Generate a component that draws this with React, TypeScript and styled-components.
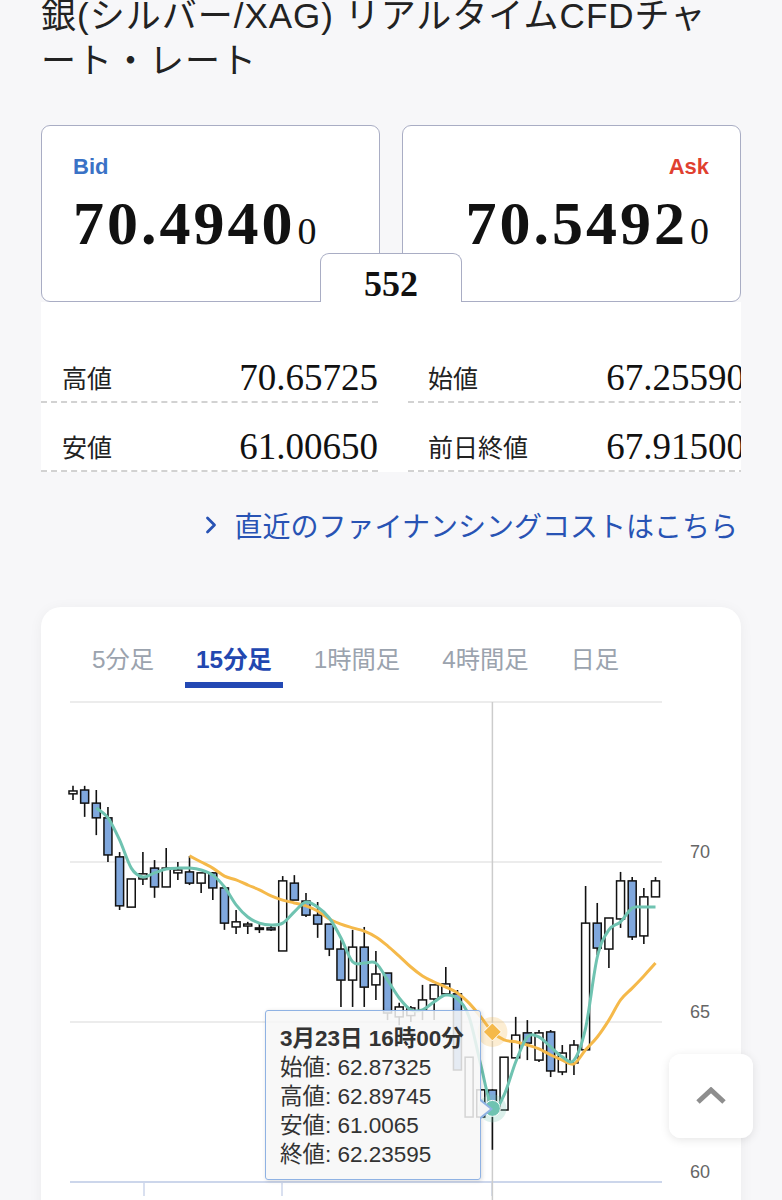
import React from "react";
import styled, { createGlobalStyle } from "styled-components";
import { ChevronRight } from "lucide-react";

const GlobalStyle = createGlobalStyle`
  html, body {
    overflow: hidden;
  }
  body {
    margin: 0;
    background: #f7f7f9;
    color: #222;
    font-family: "Liberation Sans", "Noto Sans CJK JP", sans-serif;
  }
`;

// open, high, low, close (15分足)
const candles: [number, number, number, number][] = [
  [72.13, 72.38, 71.94, 72.22],
  [72.25, 72.38, 71.41, 71.84],
  [71.84, 72.25, 70.84, 71.38],
  [71.38, 71.72, 70.0, 70.22],
  [70.16, 70.31, 68.5, 68.63],
  [68.59, 69.47, 68.59, 69.47],
  [69.47, 70.31, 69.28, 69.63],
  [69.81, 70.06, 68.88, 69.22],
  [69.22, 70.44, 69.22, 69.81],
  [69.66, 70.0, 69.44, 69.75],
  [69.69, 70.19, 69.28, 69.34],
  [69.34, 69.66, 69.03, 69.66],
  [69.66, 69.69, 68.81, 69.19],
  [69.19, 69.19, 67.88, 68.09],
  [67.97, 68.5, 67.75, 68.13],
  [68.0, 68.13, 67.75, 68.06],
  [67.91, 68.09, 67.78, 67.94],
  [67.94, 68.0, 67.84, 67.88],
  [67.22, 69.56, 67.22, 69.41],
  [69.34, 69.59, 68.81, 68.81],
  [68.78, 69.03, 68.28, 68.34],
  [68.34, 68.75, 67.63, 68.06],
  [68.06, 68.06, 67.06, 67.28],
  [67.28, 67.56, 65.47, 66.31],
  [66.31, 67.88, 65.47, 67.34],
  [67.34, 67.97, 65.47, 66.09],
  [66.16, 67.22, 65.69, 66.5],
  [66.53, 66.53, 65.06, 65.28],
  [65.16, 65.6, 64.9, 65.47],
  [65.2, 65.5, 65.0, 65.44],
  [65.38, 66.16, 65.06, 65.69],
  [65.72, 66.16, 65.06, 66.16],
  [65.88, 66.72, 65.84, 66.19],
  [65.88, 66.0, 63.5, 63.5],
  [62.03, 63.9, 62.03, 63.9],
  [62.03, 62.88, 62.03, 62.88],
  [62.87325, 62.89745, 61.0065, 62.23595],
  [62.25, 63.9, 62.25, 63.9],
  [63.88, 65.16, 63.88, 64.59],
  [64.66, 65.06, 63.81, 64.34],
  [63.81, 64.75, 63.75, 64.66],
  [64.69, 64.75, 63.28, 63.47],
  [63.44, 64.28, 63.34, 64.03],
  [63.72, 64.44, 63.34, 64.28],
  [64.13, 69.25, 64.13, 68.09],
  [68.09, 68.72, 67.09, 67.31],
  [67.28, 68.25, 66.69, 68.25],
  [68.22, 69.69, 67.94, 69.41],
  [69.41, 69.53, 67.56, 67.66],
  [67.69, 69.19, 67.44, 68.91],
  [68.91, 69.53, 68.91, 69.41],
];

// short MA starts at index 2, long MA at index 10
const shortMa = [
  71.69, 71.38, 70.69, 69.81, 69.53, 69.66, 69.78, 69.81, 69.81, 69.75, 69.59,
  69.22, 68.66, 68.28, 68.09, 68.03, 68.09, 68.44, 68.75, 68.59, 68.25, 67.63,
  66.88, 66.84, 66.84, 66.31, 65.75, 65.38, 65.38, 65.63, 65.84, 65.72, 65.16,
  63.66, 62.3, 62.72, 63.75, 64.53, 64.53, 64.22, 63.91, 63.81, 64.81, 67.03,
  67.88, 68.13, 68.56, 68.59, 68.59,
];
const longMa = [
  70.19, 70.0, 69.81, 69.56, 69.44, 69.28, 69.13, 68.94, 68.81, 68.72, 68.63,
  68.47, 68.22, 68.06, 67.94, 67.84, 67.66, 67.38, 67.06, 66.72, 66.44, 66.25,
  66.09, 65.91, 65.59, 65.16, 64.69, 64.44, 64.38, 64.28, 64.16, 63.97, 63.81,
  63.69, 64.13, 64.53, 65.06, 65.69, 66.06, 66.44, 66.84,
];

const tabs = ["5分足", "15分足", "1時間足", "4時間足", "日足"];

const stats = [
  { label: "高値", value: "70.65725" },
  { label: "始値", value: "67.25590" },
  { label: "安値", value: "61.00650" },
  { label: "前日終値", value: "67.91500" },
];

const HOVER = 36;
const xOf = (i: number) => 32 + i * 11.65;
const yOf = (p: number) => 167 + (70 - p) * 32;

const smoothPath = (pts: [number, number][]) => {
  let d = `M${pts[0][0]},${pts[0][1]}`;
  for (let i = 0; i < pts.length - 1; i++) {
    const p0 = pts[i - 1] || pts[i];
    const p1 = pts[i];
    const p2 = pts[i + 1];
    const p3 = pts[i + 2] || p2;
    const c1x = p1[0] + (p2[0] - p0[0]) / 6;
    const c1y = p1[1] + (p2[1] - p0[1]) / 6;
    const c2x = p2[0] - (p3[0] - p1[0]) / 6;
    const c2y = p2[1] - (p3[1] - p1[1]) / 6;
    d += ` C${c1x.toFixed(1)},${c1y.toFixed(1)} ${c2x.toFixed(1)},${c2y.toFixed(1)} ${p2[0].toFixed(1)},${p2[1].toFixed(1)}`;
  }
  return d;
};

const maPath = (values: number[], start: number) =>
  smoothPath(values.map((v, k) => [xOf(start + k), yOf(v)]));

const CandleChart = () => {
  const hx = xOf(HOVER);
  const orangeY = yOf(longMa[HOVER - 10]);
  const tealY = yOf(shortMa[HOVER - 2]);
  return (
    <svg width="700" height="520" viewBox="0 0 700 520">
      {[75, 70, 65].map((p) => (
        <line key={p} x1="29" x2="621" y1={yOf(p)} y2={yOf(p)} stroke="#e6e6e6" strokeWidth="1.5" />
      ))}
      <line x1="29" x2="621" y1={yOf(60)} y2={yOf(60)} stroke="#ccd6eb" strokeWidth="2" />
      {[103, 241, 451].map((x) => (
        <line key={x} x1={x} x2={x} y1={yOf(60)} y2={yOf(60) + 14} stroke="#ccd6eb" strokeWidth="1.5" />
      ))}
      {[70, 65, 60].map((p) => (
        <text key={p} x="649" y={yOf(p) - 4} fontSize="18" fill="#666" fontFamily="Liberation Sans, sans-serif">
          {p}
        </text>
      ))}
      <line x1={hx} x2={hx} y1="7" y2="520" stroke="#cccccc" strokeWidth="1.5" />

      {candles.map(([o, h, l, c], i) => {
        const x = xOf(i);
        const top = yOf(Math.max(o, c));
        const bottom = yOf(Math.min(o, c));
        return (
          <g key={i}>
            <line x1={x} x2={x} y1={yOf(h)} y2={yOf(l)} stroke="#111" strokeWidth="1.6" />
            <rect
              x={x - 4}
              y={top}
              width="8"
              height={Math.max(bottom - top, 1.5)}
              fill={c < o ? "#7fa7dd" : "#ffffff"}
              stroke="#111"
              strokeWidth="1.5"
            />
          </g>
        );
      })}

      <path d={maPath(longMa, 10)} fill="none" stroke="#f5b94a" strokeWidth="3" strokeLinejoin="round" />
      <path d={maPath(shortMa, 2)} fill="none" stroke="#6fc3b1" strokeWidth="3" strokeLinejoin="round" />

      <circle cx={hx} cy={orangeY} r="15" fill="#f5b94a" opacity="0.25" />
      <polygon
        points={`${hx},${orangeY - 9} ${hx + 9},${orangeY} ${hx},${orangeY + 9} ${hx - 9},${orangeY}`}
        fill="#f5b94a"
        stroke="#fff"
        strokeWidth="1"
      />
      <circle cx={hx} cy={tealY} r="14" fill="#6fc3b1" opacity="0.25" />
      <circle cx={hx} cy={tealY} r="8" fill="#6fc3b1" stroke="#fff" strokeWidth="1" />
    </svg>
  );
};

export default function App() {
  return (
    <>
      <GlobalStyle />
      <Page>
        <Title>銀(シルバー/XAG) リアルタイムCFDチャート・レート</Title>

        <QuoteRow>
          <QuoteBox $side="bid">
            <QuoteLabel $side="bid">Bid</QuoteLabel>
            <Price>
              70.4940<PriceTail>0</PriceTail>
            </Price>
          </QuoteBox>
          <QuoteBox $side="ask">
            <QuoteLabel $side="ask">Ask</QuoteLabel>
            <Price>
              70.5492<PriceTail>0</PriceTail>
            </Price>
          </QuoteBox>
          <SpreadTab>552</SpreadTab>
        </QuoteRow>

        <Stats>
          <StatsGrid>
            {stats.map((s) => (
              <StatRow key={s.label} $right={s.label === "始値" || s.label === "前日終値"}>
                <StatLabel>{s.label}</StatLabel>
                <StatValue>{s.value}</StatValue>
              </StatRow>
            ))}
          </StatsGrid>
        </Stats>

        <FinanceLink>
          <ChevronRight size={28} strokeWidth={2.4} />
          <span>直近のファイナンシングコストはこちら</span>
        </FinanceLink>

        <ChartCard>
          <TabList>
            {tabs.map((t) => (
              <Tab key={t}>
                <TabText $active={t === "15分足"}>{t}</TabText>
                <TabBar $active={t === "15分足"} />
              </Tab>
            ))}
          </TabList>
          <ChartArea>
            <CandleChart />
            <Tooltip>
              <TooltipTitle>3月23日 16時00分</TooltipTitle>
              <TooltipLine>始値: 62.87325</TooltipLine>
              <TooltipLine>高値: 62.89745</TooltipLine>
              <TooltipLine>安値: 61.0065</TooltipLine>
              <TooltipLine>終値: 62.23595</TooltipLine>
            </Tooltip>
          </ChartArea>
        </ChartCard>
      </Page>

      <ScrollTopButton aria-label="ページトップへ">
        <svg width="32" height="18" viewBox="0 0 32 18">
          <polyline points="3,15 16,3 29,15" fill="none" stroke="#8e8e8e" strokeWidth="5" />
        </svg>
      </ScrollTopButton>
    </>
  );
}

const Page = styled.div`
  display: flow-root;
  padding: 0 41px;
`;

const Title = styled.h1`
  margin: -7px 0 0;
  font-size: 35px;
  font-weight: 400;
  line-height: 45px;
  letter-spacing: 1px;
  color: #222;
`;

const QuoteRow = styled.div`
  position: relative;
  margin-top: 42px;
  display: grid;
  grid-template-columns: 1fr 1fr;
  column-gap: 22px;
`;

type SideProps = { $side: "bid" | "ask" };

const QuoteBox = styled.div<SideProps>`
  height: 177px;
  box-sizing: border-box;
  padding: 28px 31px 0;
  background: #fff;
  border: 1.5px solid #a9adc4;
  border-radius: 9px;
  display: flex;
  flex-direction: column;
  align-items: ${(p) => (p.$side === "bid" ? "flex-start" : "flex-end")};
`;

const QuoteLabel = styled.div<SideProps>`
  font-size: 22px;
  font-weight: 700;
  line-height: 26px;
  color: ${(p) => (p.$side === "bid" ? "#3a72c6" : "#e0402f")};
`;

const Price = styled.div`
  margin-top: 12px;
  font-family: "Liberation Serif", serif;
  font-size: 62px;
  font-weight: 700;
  line-height: 62px;
  letter-spacing: 3px;
  color: #111;
  white-space: nowrap;
`;

const PriceTail = styled.span`
  margin-left: 2px;
  font-size: 38px;
  font-weight: 400;
  letter-spacing: 0;
`;

const SpreadTab = styled.div`
  position: absolute;
  left: 50%;
  bottom: 0;
  transform: translateX(-50%);
  width: 142px;
  height: 49px;
  box-sizing: border-box;
  padding-top: 12px;
  background: #fff;
  border: 1.5px solid #a9adc4;
  border-bottom: none;
  border-radius: 9px 9px 0 0;
  text-align: center;
  font-family: "Liberation Serif", serif;
  font-size: 36px;
  font-weight: 700;
  line-height: 36px;
  color: #111;
`;

const Stats = styled.div`
  padding-top: 32px;
  background: #fff;
  overflow: hidden;
`;

const StatsGrid = styled.div`
  width: 704px;
  display: grid;
  grid-template-columns: 337px 337px;
  column-gap: 30px;
`;

const StatRow = styled.div<{ $right: boolean }>`
  height: 69px;
  box-sizing: border-box;
  padding: 19px 0 0 ${(p) => (p.$right ? "20px" : "21px")};
  display: flex;
  align-items: center;
  justify-content: space-between;
  border-bottom: 2px dashed #d2d2d2;
`;

const StatLabel = styled.span`
  font-family: "Noto Sans CJK JP", sans-serif;
  font-size: 25px;
  color: #222;
`;

const StatValue = styled.span`
  font-family: "Liberation Serif", serif;
  font-size: 37px;
  color: #111;
`;

const FinanceLink = styled.a`
  margin-top: 33px;
  padding-right: 3px;
  display: flex;
  align-items: center;
  justify-content: flex-end;
  font-family: "Noto Sans CJK JP", sans-serif;
  font-size: 28px;
  line-height: 40px;
  color: #2853b4;
  text-decoration: none;

  svg {
    margin-right: 10px;
  }
`;

const ChartCard = styled.section`
  margin-top: 62px;
  height: 640px;
  padding-top: 36px;
  box-sizing: border-box;
  background: #fff;
  border-radius: 20px;
  box-shadow: 0 2px 14px rgba(0, 0, 0, 0.05);
`;

const TabList = styled.div`
  padding-left: 40px;
  display: flex;
  gap: 20px;
`;

type ActiveProps = { $active: boolean };

const Tab = styled.div`
  padding: 0 11px;
  display: flex;
  flex-direction: column;
  align-items: stretch;
`;

const TabText = styled.span<ActiveProps>`
  font-size: 24.3px;
  line-height: 34px;
  font-weight: ${(p) => (p.$active ? 700 : 400)};
  color: ${(p) => (p.$active ? "#2247b0" : "#9ba3ae")};
  white-space: nowrap;
`;

const TabBar = styled.div<ActiveProps>`
  height: 6px;
  margin: 5px -11px 0;
  background: ${(p) => (p.$active ? "#2349b4" : "transparent")};
`;

const ChartArea = styled.div`
  position: relative;
  margin-top: 7px;

  svg {
    display: block;
  }
`;

const Tooltip = styled.div`
  position: absolute;
  left: 224px;
  top: 315px;
  width: 216px;
  height: 170px;
  box-sizing: border-box;
  padding: 13px 0 0 14px;
  background: rgba(247, 247, 247, 0.85);
  border: 1.5px solid #8fb2e3;
  border-radius: 3px;
  box-shadow: 1px 1px 4px rgba(0, 0, 0, 0.15);
  color: #333;

  &::before {
    content: "";
    position: absolute;
    right: -13px;
    top: 88px;
    border-style: solid;
    border-width: 10px 0 10px 12px;
    border-color: transparent transparent transparent #8fb2e3;
  }

  &::after {
    content: "";
    position: absolute;
    right: -10px;
    top: 90px;
    border-style: solid;
    border-width: 8px 0 8px 10px;
    border-color: transparent transparent transparent #f4f4f5;
  }
`;

const TooltipTitle = styled.div`
  font-size: 22.5px;
  font-weight: 700;
  line-height: 29px;
  white-space: nowrap;
`;

const TooltipLine = styled.div`
  font-size: 22.5px;
  line-height: 29px;
  white-space: nowrap;
`;

const ScrollTopButton = styled.button`
  position: fixed;
  right: 29px;
  bottom: 62px;
  width: 84px;
  height: 84px;
  padding: 0;
  display: flex;
  align-items: center;
  justify-content: center;
  background: rgba(255, 255, 255, 0.96);
  border: none;
  border-radius: 12px;
  box-shadow: 0 2px 10px rgba(0, 0, 0, 0.1);
  cursor: pointer;
`;
